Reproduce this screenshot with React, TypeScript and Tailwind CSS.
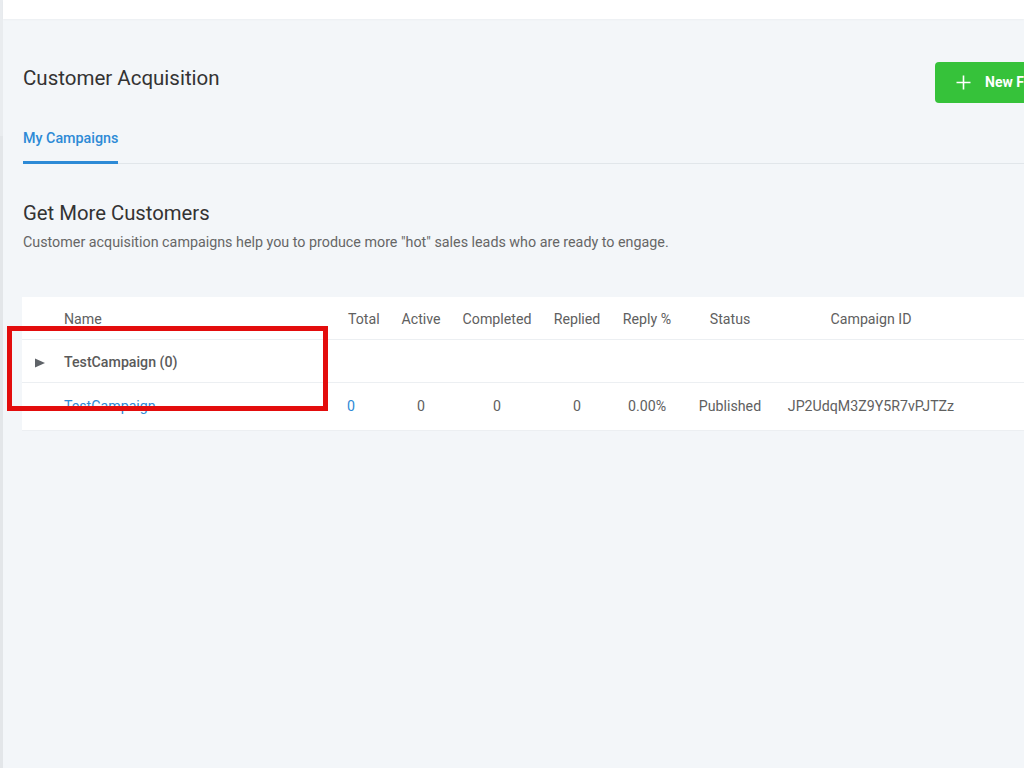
import React from "react";

const cols =
  "grid grid-cols-[42px_283px_47px_54px_98px_62px_78px_88px_194px_1fr] items-center";

function Arrow() {
  return (
    <svg width="10" height="10" viewBox="0 0 10 10" className="ml-[13px]">
      <path d="M0 0.5 L10 5 L0 9.5 Z" fill="#5f6368" />
    </svg>
  );
}

export default function App() {
  return (
    <div
      className="relative flex h-[768px] w-full overflow-hidden bg-[#f3f6f9] text-[#333]"
      style={{ fontFamily: "Roboto, 'Noto Sans', Arial, sans-serif" }}
    >
      <div className="flex w-[3px] shrink-0 flex-col">
        <div className="h-[136px] bg-[#e9ecef]" />
        <div className="flex-1 bg-[#e3e6e9]" />
      </div>

      <div className="flex min-w-0 flex-1 flex-col">
        <div className="h-[19px] shrink-0 bg-white shadow-[0_1px_2px_rgba(0,0,0,0.03)]" />

        <div className="pl-[20px]">
          <div className="w-[1072px]">
            <div className="flex items-start pt-[43px]">
              <h1 className="mt-[2px] flex-1 text-[20.5px] leading-7 font-normal text-[#333]">
                Customer Acquisition
              </h1>
              <button className="flex h-[41px] w-[160px] items-center gap-[14px] rounded-[4px] bg-[#36c23a] pl-[21px] text-[14px] font-bold whitespace-nowrap text-white">
                <svg width="15" height="15" viewBox="0 0 15 15">
                  <path d="M7.5 0.5 V14.5 M0.5 7.5 H14.5" stroke="#fff" strokeWidth="1.6" />
                </svg>
                New Funnel
              </button>
            </div>

            <div className="mt-[25px] flex border-b border-[#e1e6ea]">
              <div className="-mb-px border-b-[3px] border-[#2d8ad6] pb-[13px] text-[14.3px] leading-5 font-medium text-[#2d8ad6]">
                My Campaigns
              </div>
            </div>

            <h2 className="mt-[35px] text-[20.3px] leading-7 font-normal text-[#333]">
              Get More Customers
            </h2>
            <p className="mt-[5px] text-[14.3px] leading-5 text-[#666]">
              Customer acquisition campaigns help you to produce more "hot" sales leads who are ready to engage.
            </p>

            <div className="mt-[45px] -ml-px w-[1073px] bg-white text-[14.2px] text-[#606060]">
              <div className={`${cols} h-[43px] border-b border-[#eceff2] pt-[3px]`}>
                <div />
                <div>Name</div>
                <div className="pl-px">Total</div>
                <div className="text-center">Active</div>
                <div className="text-center">Completed</div>
                <div className="text-center">Replied</div>
                <div className="text-center">Reply %</div>
                <div className="text-center">Status</div>
                <div className="text-center">Campaign ID</div>
                <div />
              </div>
              <div className={`${cols} h-[43px] border-b border-[#eceff2] pt-[3px]`}>
                <Arrow />
                <div className="font-medium text-[#5a5a5a]">TestCampaign (0)</div>
              </div>
              <div className={`${cols} h-[48px] border-b border-[#eceff2]`}>
                <div />
                <div className="text-[#2d8ad6]">TestCampaign</div>
                <div className="text-[#2d8ad6]">0</div>
                <div className="text-center">0</div>
                <div className="text-center">0</div>
                <div className="text-center">0</div>
                <div className="text-center">0.00%</div>
                <div className="text-center">Published</div>
                <div className="text-center">JP2UdqM3Z9Y5R7vPJTZz</div>
                <div />
              </div>
            </div>
          </div>
        </div>
      </div>

      <div className="absolute top-[326px] left-[7px] h-[85px] w-[321px] border-[5px] border-[#e30d0d]" />
    </div>
  );
}
